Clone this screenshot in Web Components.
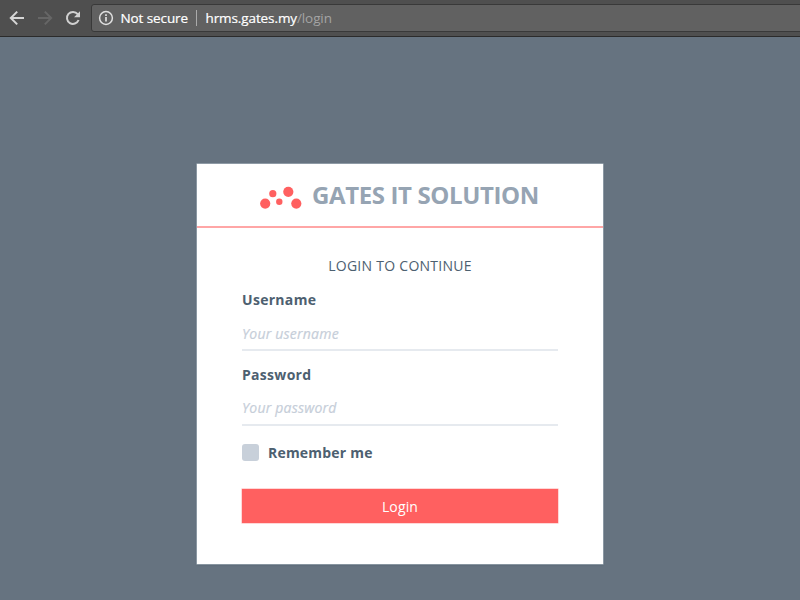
<!DOCTYPE html>
<html lang="en">
<head>
<meta charset="utf-8">
<title>Login</title>
<style>
html, body { margin: 0; height: 100%; }
body { font-family: "Open Sans", "Noto Sans", sans-serif; overflow: hidden; }
</style>
</head>
<body>
<login-page></login-page>
<script>
function define(name, html) {
  const template = document.createElement('template');
  template.innerHTML = html;
  customElements.define(name, class extends HTMLElement {
    constructor() {
      super();
      this.attachShadow({ mode: 'open' }).append(template.content.cloneNode(true));
    }
  });
}

define('browser-bar', `
<style>
:host { display: flex; align-items: flex-start; box-sizing: border-box; height: 37px; padding-top: 4px; background: #4f4f4f; border-bottom: 1px solid #2b2b2b; overflow: hidden; }
.nav { flex: none; width: 91px; height: 28px; }
.address { flex: 1; display: flex; align-items: center; box-sizing: border-box; height: 28px; padding-left: 6px; margin-right: -4px; background: #616161; border: 1px solid #393939; border-radius: 3px; font-size: 13.5px; line-height: 26px; letter-spacing: -.1px; white-space: nowrap; color: #fff; -webkit-text-stroke: .2px; }
.info { flex: none; width: 16px; height: 16px; margin-right: 6.5px; }
.secure { width: 75.5px; }
.bar { width: 1px; height: 16px; background: #aaa; margin-right: 8.5px; }
.path { color: #a4a4a4; -webkit-text-stroke: 0; }
</style>
<svg class="nav" viewBox="0 4 91 28" fill="none" stroke-width="2">
  <path d="M24 18H11.2M17.2 11.6L10.8 18L17.2 24.4" stroke="#d6d6d6"/>
  <path d="M38 18H50.8M44.8 11.6L51.2 18L44.8 24.4" stroke="#666"/>
  <path d="M77.7 14.2A6 6 0 1 0 78.6 20" stroke="#d0d0d0"/>
  <path d="M80 11.2V17.2H74Z" fill="#d0d0d0"/>
</svg>
<div class="address">
  <svg class="info" viewBox="0 0 16 16" fill="none" stroke="#e0e0e0"><circle cx="8" cy="8" r="6.4" stroke-width="1.5"/><path d="M8 7V11.6M8 4.3V5.9" stroke-width="1.7"/></svg>
  <span class="secure">Not secure</span><span class="bar"></span><span class="host">hrms.gates.my</span><span class="path">/login</span>
</div>`);

define('brand-header', `
<style>
:host { display: flex; box-sizing: border-box; height: 64px; padding-left: 62px; border-bottom: 2px solid #ffa6a6; color: #96a4b3; font-size: 24px; font-weight: 700; line-height: 62px; letter-spacing: -.37px; white-space: nowrap; }
svg { flex: none; width: 44px; height: 26px; margin: 20px 9px 0 0; }
</style>
<svg viewBox="0 0 44 26" fill="#ff6060"><circle cx="6.2" cy="19.6" r="5.1"/><circle cx="13.8" cy="9.7" r="3.6"/><circle cx="20.3" cy="17.7" r="3.2"/><circle cx="29.3" cy="7.8" r="5.1"/><circle cx="37.3" cy="19.6" r="5.1"/></svg>
<slot></slot>`);

define('text-field', `
<style>
:host { display: block; height: 75px; box-sizing: border-box; }
.label { display: block; height: 20px; line-height: 20px; font-size: 14px; font-weight: 700; letter-spacing: .3px; color: #4d6070; }
.input { display: block; height: 39px; line-height: var(--input-line, 47px); font-size: 14px; font-style: italic; letter-spacing: .22px; color: #c6ced9; -webkit-text-stroke: .2px; border-bottom: 2px solid #e6eaef; }
</style>
<span class="label"><slot name="label"></slot></span>
<span class="input"><slot></slot></span>`);

define('check-option', `
<style>
:host { display: flex; align-items: center; height: 20px; gap: 9px; font-size: 14px; font-weight: 700; letter-spacing: .2px; color: #4d6070; }
.box { width: 17px; height: 17px; border-radius: 3px; background: #c8d0da; }
</style>
<span class="box"></span><slot></slot>`);

define('action-button', `
<style>
:host { display: block; height: 34px; line-height: 35px; background: #ff6060; color: #fff; font-size: 14px; letter-spacing: .15px; text-align: center; box-shadow: 0 0 0 .5px #ffb0b0; }
</style>
<slot></slot>`);

define('login-card', `
<style>
:host { display: block; box-sizing: border-box; width: 406px; height: 400px; background: #fff; box-shadow: 0 0 0 .5px #b8c3cb, 0 1px 2px rgba(50,65,80,.35); }
.body { padding: 28px 45px 0; }
.title { height: 20px; line-height: 20px; margin-bottom: 14px; text-align: center; font-size: 14px; letter-spacing: .27px; color: #4d6070; }
check-option { margin: 2px 0 27px; }
</style>
<brand-header>GATES IT SOLUTION</brand-header>
<div class="body">
  <div class="title">LOGIN TO CONTINUE</div>
  <text-field><span slot="label">Username</span>Your username</text-field>
  <text-field style="--input-line: 46px"><span slot="label">Password</span>Your password</text-field>
  <check-option>Remember me</check-option>
  <action-button>Login</action-button>
</div>`);

define('login-page', `
<style>
:host { display: flex; flex-direction: column; height: 600px; background: #667380; }
main { padding: 127px 0 0 197px; }
</style>
<browser-bar></browser-bar>
<main><login-card></login-card></main>`);
</script>
</body>
</html>
